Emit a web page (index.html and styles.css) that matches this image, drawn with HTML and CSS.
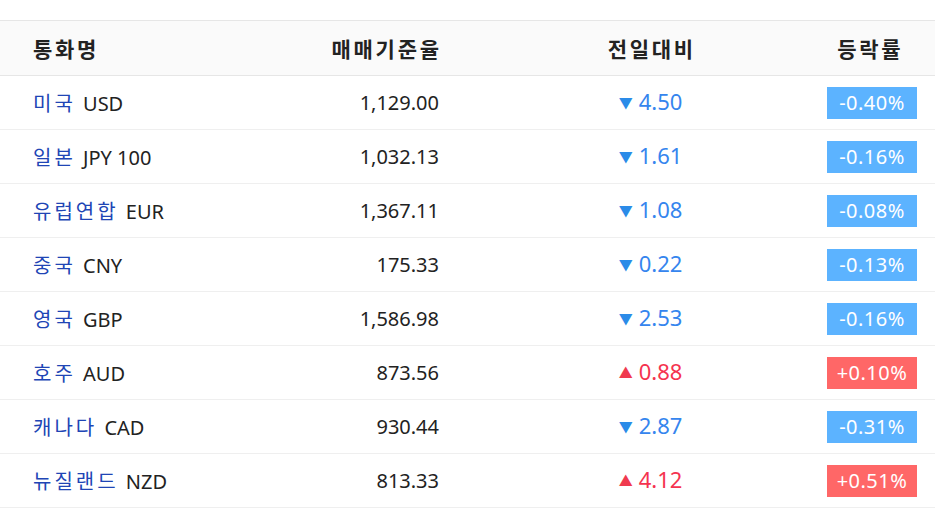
FILE: index.html
```html
<!DOCTYPE html>
<html lang="ko">
<head>
<meta charset="utf-8">
<link rel="stylesheet" href="styles.css">
</head>
<body>
<div class="table">
  <div class="row head">
    <div class="c1"><span class="ht">통화명</span></div>
    <div class="c2"><span class="ht">매매기준율</span></div>
    <div class="c3"><span class="ht">전일대비</span></div>
    <div class="c4"><span class="ht">등락률</span></div>
  </div>
  <div class="row">
    <div class="c1"><span class="nm">미국</span> USD</div>
    <div class="c2">1,129.00</div>
    <div class="c3 down"><span class="tri">▼</span>4.50</div>
    <div class="c4"><span class="badge bd">-0.40%</span></div>
  </div>
  <div class="row">
    <div class="c1"><span class="nm">일본</span> JPY 100</div>
    <div class="c2">1,032.13</div>
    <div class="c3 down"><span class="tri">▼</span>1.61</div>
    <div class="c4"><span class="badge bd">-0.16%</span></div>
  </div>
  <div class="row">
    <div class="c1"><span class="nm">유럽연합</span> EUR</div>
    <div class="c2">1,367.11</div>
    <div class="c3 down"><span class="tri">▼</span>1.08</div>
    <div class="c4"><span class="badge bd">-0.08%</span></div>
  </div>
  <div class="row">
    <div class="c1"><span class="nm">중국</span> CNY</div>
    <div class="c2">175.33</div>
    <div class="c3 down"><span class="tri">▼</span>0.22</div>
    <div class="c4"><span class="badge bd">-0.13%</span></div>
  </div>
  <div class="row">
    <div class="c1"><span class="nm">영국</span> GBP</div>
    <div class="c2">1,586.98</div>
    <div class="c3 down"><span class="tri">▼</span>2.53</div>
    <div class="c4"><span class="badge bd">-0.16%</span></div>
  </div>
  <div class="row">
    <div class="c1"><span class="nm">호주</span> AUD</div>
    <div class="c2">873.56</div>
    <div class="c3 up"><span class="tri">▲</span>0.88</div>
    <div class="c4"><span class="badge bu">+0.10%</span></div>
  </div>
  <div class="row">
    <div class="c1"><span class="nm">캐나다</span> CAD</div>
    <div class="c2">930.44</div>
    <div class="c3 down"><span class="tri">▼</span>2.87</div>
    <div class="c4"><span class="badge bd">-0.31%</span></div>
  </div>
  <div class="row">
    <div class="c1"><span class="nm">뉴질랜드</span> NZD</div>
    <div class="c2">813.33</div>
    <div class="c3 up"><span class="tri">▲</span>4.12</div>
    <div class="c4"><span class="badge bu">+0.51%</span></div>
  </div>
</div>
</body>
</html>
```
FILE: styles.css
```css
html, body {
  margin: 0;
  background: #fff;
}
body {
  font-family: "Noto Sans", "Noto Sans CJK KR", sans-serif;
  color: #222;
  padding-top: 20px;
}
.table {
  width: 935px;
  border-top: 1px solid #e6e6e6;
}
.row {
  display: grid;
  grid-template-columns: 240px 200px 387px 108px;
  align-items: center;
  height: 53px;
  border-bottom: 1px solid #efefef;
  font-size: 20px;
}
.row.head {
  height: 54px;
  background: #fafafa;
  border-bottom: 1px solid #e6e6e6;
  font-weight: 700;
  font-size: 21px;
  color: #222;
}
.ht {
  letter-spacing: 2.7px;
  margin-right: -2.7px;
}
.c1 {
  padding-left: 33px;
}
.c2 {
  text-align: right;
  padding-right: 1px;
}
.c3 {
  text-align: center;
  padding-left: 34px;
}
.c4 {
  padding-right: 18px;
  text-align: center;
}
.head .c4 {
  padding-right: 24px;
}
.nm {
  color: #2045b5;
  letter-spacing: 3px;
  margin-right: 2px;
}
.row .c3.down, .row .c3.up {
  font-size: 22px;
  padding-bottom: 3px;
}
.down {
  color: #3585ee;
}
.up {
  color: #f5334f;
}
.tri {
  font-size: 14px;
  margin-right: 6px;
  position: relative;
  top: -2px;
}
.down .tri {
  color: #2b8be8;
}
.up .tri {
  color: #f03a4f;
}
.badge {
  display: inline-block;
  width: 90px;
  height: 32px;
  line-height: 32px;
  color: #fff;
  font-size: 20px;
  letter-spacing: 0.5px;
  text-align: center;
}
.bd {
  background: #5cb3ff;
}
.bu {
  background: #ff6767;
}
```
